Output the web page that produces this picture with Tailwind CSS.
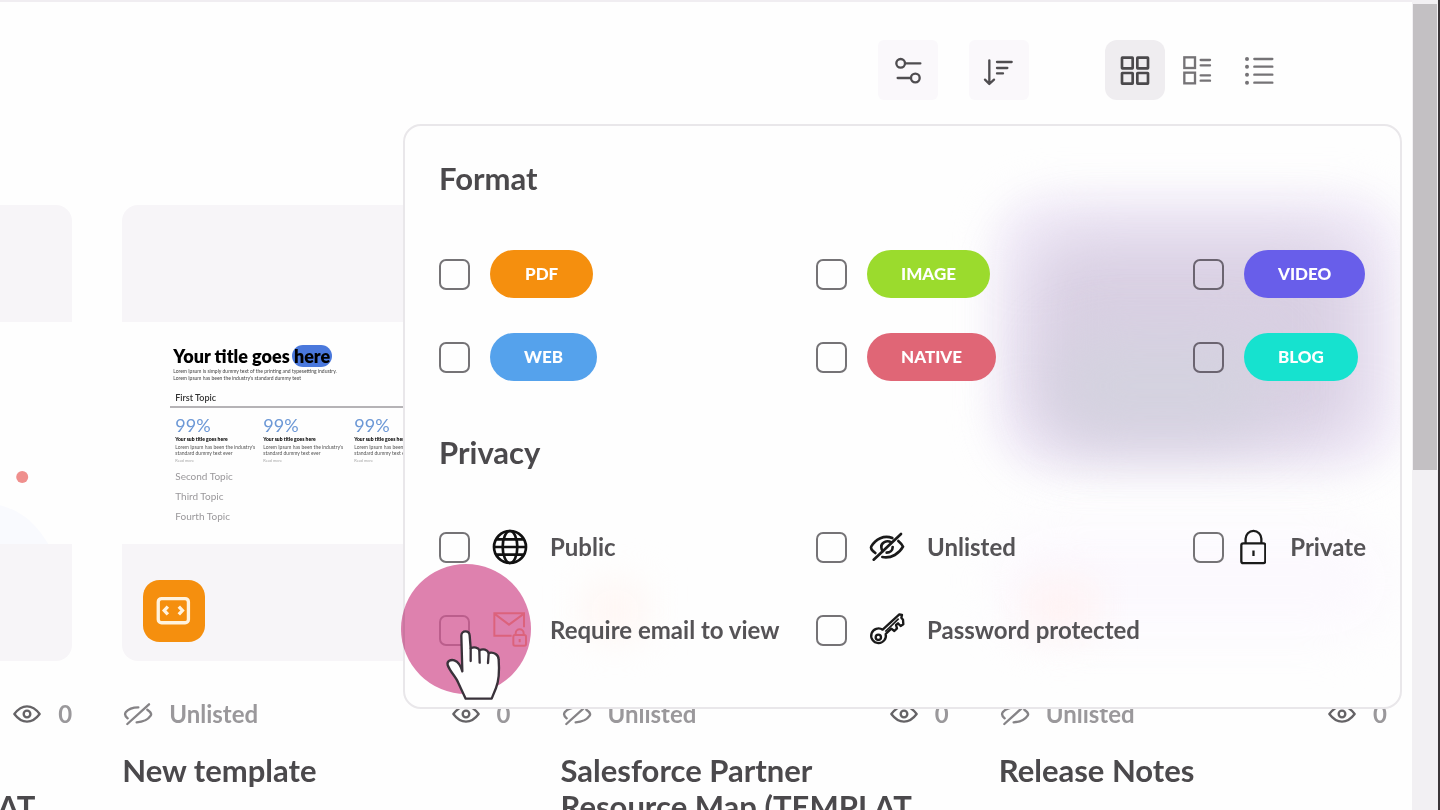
<!DOCTYPE html>
<html lang="en">
<head>
<meta charset="utf-8">
<meta name="viewport" content="width=device-width, initial-scale=1">
<title>Library</title>
<script src="https://cdn.jsdelivr.net/npm/@tailwindcss/browser@4"></script>
</head>
<body class="h-screen overflow-hidden flex bg-[#fefefe] font-['Lato','Open_Sans',sans-serif] text-[#4b494c]">

<!-- Shared icon shapes -->
<svg class="hidden" aria-hidden="true">
  <symbol id="eye" viewBox="42 70 88 66">
    <path d="M48 103C60 87 72 80 86 80s26 7 38 23c-12 16-24 23-38 23S60 119 48 103Z" fill="none" stroke="currentColor" stroke-width="7" stroke-linejoin="round"/>
    <circle cx="86" cy="103" r="10" fill="none" stroke="currentColor" stroke-width="7"/>
  </symbol>
  <symbol id="eye-off" viewBox="374 68 88 72">
    <path d="M386 134 451 75M419 84c-16 0-30 5-38 15-4 6-1 12 6 18M446 91c9 6 14 12 10 18-8 12-21 19-42 20" fill="none" stroke="currentColor" stroke-width="7" stroke-linecap="round"/>
  </symbol>
</svg>

<div class="relative flex-1 min-w-0 overflow-hidden border-t-2 border-[#f0edf1]">
  <header class="flex justify-end items-center pt-[38px] pr-[123px] gap-[76px]">
    <div class="flex gap-[31px]">
      <button type="button" aria-label="Filter" class="size-[60px] rounded-md bg-[#faf8fb] flex items-center justify-center">
        <svg class="size-8" viewBox="94 162 96 96" fill="none" stroke="#4f4d50" stroke-width="7" stroke-linecap="round"><circle cx="120" cy="190" r="13"/><path d="M136 190H179M111 234H149"/><circle cx="164" cy="234" r="13"/></svg>
      </button>
      <button type="button" aria-label="Sort" class="size-[60px] rounded-md bg-[#faf8fb] flex items-center justify-center">
        <svg class="size-8" viewBox="371 162 96 96" fill="none" stroke="#4f4d50" stroke-width="7" stroke-linecap="round" stroke-linejoin="round"><path d="M390 181V252M377 239 390 252 404 239M413 186H457M413 204H444M413 220H431"/></svg>
      </button>
    </div>
    <div class="flex gap-[2px]">
      <button type="button" aria-label="Grid view" aria-pressed="true" class="size-[60px] rounded-xl bg-[#efedf0] flex items-center justify-center">
        <svg class="size-8" viewBox="776 162 96 96" fill="none" stroke="#4b494c" stroke-width="8"><rect x="785" y="173" width="32" height="32" rx="1"/><rect x="831" y="173" width="32" height="32" rx="1"/><rect x="785" y="219" width="32" height="32" rx="1"/><rect x="831" y="219" width="32" height="32" rx="1"/></svg>
      </button>
      <button type="button" aria-label="Card view" class="size-[60px] flex items-center justify-center">
        <svg class="size-8" viewBox="962 163 96 96" fill="none" stroke="#757376" stroke-width="7"><rect x="972" y="173" width="32" height="32"/><rect x="972" y="219" width="32" height="32"/><path stroke-linecap="round" d="M1021 181H1049M1021 197H1049M1021 227H1049M1021 243H1049"/></svg>
      </button>
      <button type="button" aria-label="List view" class="size-[60px] flex items-center justify-center">
        <svg class="size-8" viewBox="1150 162 96 96" stroke="#757376" stroke-width="7" stroke-linecap="round"><path d="M1184 177H1238M1184 200H1238M1184 224H1238M1184 248H1238"/><g fill="#757376" stroke="none"><circle cx="1162" cy="177" r="6"/><circle cx="1162" cy="200" r="6"/><circle cx="1162" cy="224" r="6"/><circle cx="1162" cy="248" r="6"/></g></svg>
      </button>
    </div>
  </header>

  <main class="grid grid-cols-4 gap-[50px] mt-[105px] -ml-[316px] mr-[25px]">
    <article>
      <div class="h-[456px] rounded-2xl bg-[#f7f5f8] py-[117px]">
        <svg class="w-full h-full bg-[#fefefe]" viewBox="0 0 388 222" preserveAspectRatio="none"><path d="M260 182C330 172 350 200 364 222H260Z" fill="#f9fafe"/><circle cx="338" cy="155" r="6" fill="#ef8f8d"/></svg>
      </div>
      <div class="mt-[37px] h-8 flex items-center text-2xl font-bold text-[#9a989b]">
        <svg class="w-[30px] h-6 ml-px mr-4 text-[#858386]"><use href="#eye-off"/></svg>Unlisted
        <svg class="w-[30px] h-[22px] ml-auto mr-4 text-[#656366]"><use href="#eye"/></svg>0
      </div>
      <h2 class="mt-[22px] text-[31px] leading-[36px] font-bold"><span class="block">Salesforce Partner</span><span class="block">Resource Map (TEMPLAT</span></h2>
    </article>

    <article>
      <div class="relative h-[456px] rounded-2xl bg-[#f7f5f8] py-[117px]">
        <div class="h-full bg-[#fefefe] pl-12 pt-6 overflow-hidden text-black whitespace-nowrap">
          <h3 class="pl-[3px] text-[18px] leading-5 font-extrabold">Your title goes <span class="-ml-[2px] px-[2px] rounded-full bg-[#4a78dc]">here</span></h3>
          <p class="pl-[3px] mt-[2px] text-[5px] leading-[7px] text-[#444]">Lorem Ipsum is simply dummy text of the printing and typesetting industry.<br>Lorem Ipsum has been the industry's standard dummy text</p>
          <h4 class="pl-[5px] mt-[10px] text-[9px] leading-3 font-semibold text-[#333]">First Topic</h4>
          <div class="border-t-2 border-[#b5b3b6] mt-[2px] pl-[5px] pt-[7px] grid grid-cols-[88px_91px_88px] text-[5px] leading-[6px] text-[#555]">
            <div><p class="text-[18px] leading-5 text-[#6c98d6]">99%</p><p class="mt-px font-black text-black">Your sub title goes here</p><p class="mt-[2px]">Lorem Ipsum has been the industry's<br>standard dummy text ever</p><p class="mt-[2px] text-[4px] text-[#aaa]">Read more</p></div>
            <div><p class="text-[18px] leading-5 text-[#6c98d6]">99%</p><p class="mt-px font-black text-black">Your sub title goes here</p><p class="mt-[2px]">Lorem Ipsum has been the industry's<br>standard dummy text ever</p><p class="mt-[2px] text-[4px] text-[#aaa]">Read more</p></div>
            <div><p class="text-[18px] leading-5 text-[#6c98d6]">99%</p><p class="mt-px font-black text-black">Your sub title goes here</p><p class="mt-[2px]">Lorem Ipsum has been the industry's<br>standard dummy text ever</p><p class="mt-[2px] text-[4px] text-[#aaa]">Read more</p></div>
          </div>
          <ul class="pl-[5px] mt-[2px] text-[10px] leading-5 text-[#9a989b]"><li>Second Topic</li><li>Third Topic</li><li>Fourth Topic</li></ul>
        </div>
        <div class="absolute left-[21px] bottom-[19px] size-[62px]">
          <svg class="size-full" viewBox="428 508 187 187"><rect x="428" y="508" width="187" height="187" rx="50" fill="#f58f0e"/><g fill="none" stroke="#fff3df"><rect x="474" y="564" width="91" height="73" rx="10" stroke-width="10"/><path d="M503 588 492 600 503 612M536 588 547 600 536 612" stroke-width="10"/></g></svg>
        </div>
      </div>
      <div class="mt-[37px] h-8 flex items-center text-2xl font-bold text-[#9a989b]">
        <svg class="w-[30px] h-6 ml-px mr-4 text-[#858386]"><use href="#eye-off"/></svg>Unlisted
        <svg class="w-[30px] h-[22px] ml-auto mr-4 text-[#656366]"><use href="#eye"/></svg>0
      </div>
      <h2 class="mt-[22px] text-[31px] leading-[36px] font-bold">New template</h2>
    </article>

    <article>
      <div class="h-[456px] rounded-2xl bg-[#f7f5f8]"></div>
      <div class="mt-[37px] h-8 flex items-center text-2xl font-bold text-[#9a989b]">
        <svg class="w-[30px] h-6 ml-px mr-4 text-[#858386]"><use href="#eye-off"/></svg>Unlisted
        <svg class="w-[30px] h-[22px] ml-auto mr-4 text-[#656366]"><use href="#eye"/></svg>0
      </div>
      <h2 class="mt-[22px] text-[31px] leading-[36px] font-bold"><span class="block">Salesforce Partner</span><span class="block">Resource Map (TEMPLAT</span></h2>
    </article>

    <article>
      <div class="h-[456px] rounded-2xl bg-[#f7f5f8]"></div>
      <div class="mt-[37px] h-8 flex items-center text-2xl font-bold text-[#9a989b]">
        <svg class="w-[30px] h-6 ml-px mr-4 text-[#858386]"><use href="#eye-off"/></svg>Unlisted
        <svg class="w-[30px] h-[22px] ml-auto mr-4 text-[#656366]"><use href="#eye"/></svg>0
      </div>
      <h2 class="mt-[22px] text-[31px] leading-[36px] font-bold">Release Notes</h2>
    </article>
  </main>

  <!-- Filter menu -->
  <form class="absolute top-[122px] left-[403px] right-[10px] rounded-[18px] border-2 border-[#e9e7ea] bg-[#fefefe] px-[34px] pt-[32px] pb-[53px]">
    <!-- Frosted colour showing through the menu -->
    <div class="absolute inset-0 rounded-2xl overflow-hidden">
      <div class="absolute left-[590px] right-0 top-[70px] h-[272px] rounded-[50px] bg-[#f2ecf9] blur-[20px]"></div>
      <div class="absolute left-[622px] right-[36px] top-[108px] h-[210px] rounded-[50px] bg-[#d9d0e3] blur-[30px]"></div>
      <div class="absolute left-[650px] right-[130px] top-[210px] h-[100px] rounded-[40px] bg-[#d4d2df] blur-[28px]"></div>
      <div class="absolute left-[590px] right-[10px] top-[400px] h-[110px] rounded-full bg-[#fcf9fe] blur-[24px]"></div>
      <div class="absolute left-[180px] w-[60px] top-[460px] h-[50px] bg-[#fff5f2] blur-[20px]"></div>
      <div class="absolute left-[620px] w-[70px] top-[456px] h-[50px] bg-[#fff2f2] blur-[20px]"></div>
    </div>

    <div class="relative">
      <fieldset>
        <legend class="text-[31px] leading-[40px] font-bold">Format</legend>
        <div class="mt-[52px] grid grid-cols-[1fr_1fr_173px] gap-y-[35px] text-[17px] font-black text-white">
          <label class="flex items-center gap-[20px]"><input type="checkbox" class="appearance-none size-[31px] rounded-[7px] border-2 border-[#757376]"><span class="h-12 px-[35px] rounded-full bg-[#f58f0e] flex items-center">PDF</span></label>
          <label class="flex items-center gap-[20px]"><input type="checkbox" class="appearance-none size-[31px] rounded-[7px] border-2 border-[#757376]"><span class="h-12 px-[34px] rounded-full bg-[#9bdb2d] flex items-center">IMAGE</span></label>
          <label class="flex items-center gap-[20px]"><input type="checkbox" class="appearance-none size-[31px] rounded-[7px] border-2 border-[#6b6470]"><span class="h-12 px-[34px] rounded-full bg-[#685eea] flex items-center">VIDEO</span></label>
          <label class="flex items-center gap-[20px]"><input type="checkbox" class="appearance-none size-[31px] rounded-[7px] border-2 border-[#757376]"><span class="h-12 px-[34px] rounded-full bg-[#55a2ec] flex items-center">WEB</span></label>
          <label class="flex items-center gap-[20px]"><input type="checkbox" class="appearance-none size-[31px] rounded-[7px] border-2 border-[#757376]"><span class="h-12 px-[34px] rounded-full bg-[#e06676] flex items-center">NATIVE</span></label>
          <label class="flex items-center gap-[20px]"><input type="checkbox" class="appearance-none size-[31px] rounded-[7px] border-2 border-[#6b6470]"><span class="h-12 px-[34px] rounded-full bg-[#16e2cf] flex items-center">BLOG</span></label>
        </div>
      </fieldset>

      <fieldset class="mt-[51px]">
        <legend class="text-[31px] leading-[40px] font-bold">Privacy</legend>
        <div class="mt-[51px] grid grid-cols-[1fr_1fr_173px] gap-y-[35px] text-2xl font-bold text-[#555356]">
          <label class="h-12 flex items-center gap-[20px]"><input type="checkbox" class="appearance-none size-[31px] rounded-[7px] border-2 border-[#757376]">
            <svg class="size-10" viewBox="303 83 120 120" fill="none" stroke="#111" stroke-width="8"><circle cx="363" cy="143" r="48"/><ellipse cx="363" cy="143" rx="22" ry="48"/><path d="M315 143H411M321 120H405M321 166H405"/></svg>
            Public</label>
          <label class="h-12 flex items-center gap-[20px]"><input type="checkbox" class="appearance-none size-[31px] rounded-[7px] border-2 border-[#757376]">
            <svg class="size-10" viewBox="207 85 120 120" fill="none" stroke="#1a1a1a" stroke-width="8" stroke-linecap="round"><path d="M227 183 309 106M283 118C258 108 233 121 220 143c-3 5 4 14 12 20M301 127c7 6 12 12 14 17-11 20-34 36-62 31M280 131c-14-8-32 1-30 15 0 6 2 9 5 12M284 145c0 10-8 17-18 17"/></svg>
            Unlisted</label>
          <label class="h-12 flex items-center gap-4"><input type="checkbox" class="appearance-none size-[31px] rounded-[7px] border-2 border-[#757376]">
            <svg class="w-[27px] h-9" viewBox="419 89 81 108" fill="none" stroke="#1a1a1a" stroke-width="7"><rect x="423" y="132" width="73" height="60" rx="6"/><path d="M436 132V118a24 24 0 0 1 48 0V132M460 154V170"/></svg>
            <span class="ml-2">Private</span></label>
          <label class="h-12 flex items-center gap-[20px]"><input type="checkbox" class="appearance-none size-[31px] rounded-[7px] border-2 border-[#d6b9cc]">
            <svg class="size-10" viewBox="303 333 120 120" fill="none" stroke="#fcc0b4" stroke-width="6"><path d="M368 410H316V343H405V385M316 344 360 377 405 344"/><rect x="373" y="408" width="38" height="32" rx="5"/><path d="M380 408V403a12 12 0 0 1 24 0V408M392 420V430"/></svg>
            Require email to view</label>
          <label class="h-12 flex items-center gap-[20px]"><input type="checkbox" class="appearance-none size-[31px] rounded-[7px] border-2 border-[#757376]">
            <svg class="size-10" viewBox="207 333 120 120" fill="none" stroke="#1a1a1a" stroke-width="7" stroke-linejoin="round"><path d="M254 392 304 346 312 348 310 356 315 362 316 376 308 381 300 373 294 378 297 388 289 396 280 389 263 405A22 22 0 1 1 254 392Z"/><path d="M262 398 302 359" stroke-width="5"/><circle cx="241" cy="415" r="8"/></svg>
            Password protected</label>
        </div>
      </fieldset>
    </div>

    <!-- Click highlight and pointer -->
    <div class="absolute left-[-4px] top-[438px] size-[130px] rounded-full bg-[#df82af] mix-blend-multiply pointer-events-none"></div>
    <svg class="absolute left-[40px] top-[502px] w-[57px] h-[75px] pointer-events-none" viewBox="165 385 171 225" fill="#fefefe" stroke="#39323a" stroke-width="7" stroke-linejoin="round" stroke-linecap="round"><path d="M217 515 214 408C214 391 238 391 239 408L242 446C252 440 266 444 268 452 280 446 292 450 296 460 312 456 326 466 326 480 329 520 326 545 318 565L305 597H227L204 548C198 532 180 516 173 496 170 484 182 479 193 482 204 486 213 500 217 515Z"/><path d="M242 446V484M268 452 269 489M296 460 294 490" fill="none"/></svg>
  </form>
</div>

<!-- Scrollbar -->
<div class="w-[28px] shrink-0 border-r-2 border-[#3a3538] bg-[#f2f0f3] pt-1 px-px">
  <div class="h-[466px] bg-[#c3c0c3]"></div>
</div>
</body>
</html>
